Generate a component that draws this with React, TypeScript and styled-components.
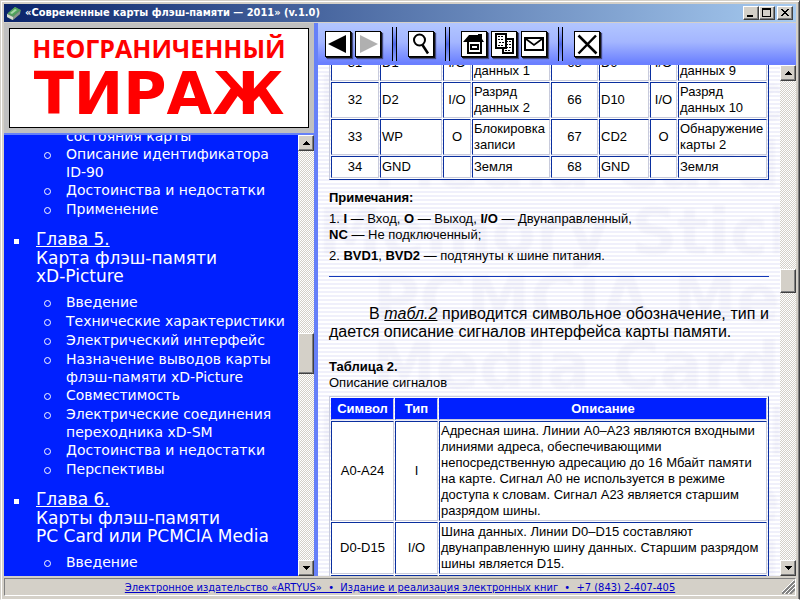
import React, { useLayoutEffect, useRef } from "react";
import styled, { createGlobalStyle, css } from "styled-components";

const face = "#d4d0c8";
const frameBlue = "#6680f8";
const lineBlue = "#0a2f9e";
const lineLight = "#c8cbdc";
const brightBlue = "#0020ff";

const GlobalStyle = createGlobalStyle`
  * { box-sizing: border-box; }
  html, body, #root { height: 100%; margin: 0; }
  body { overflow: hidden; font-family: "Liberation Sans", Arial, sans-serif; font-size: 13px; color: #000; }
`;

const raised = css`
  background: ${face};
  border: 1px solid;
  border-color: #fff #404040 #404040 #fff;
  box-shadow: inset -1px -1px 0 #808080;
`;

const Window = styled.div`
  height: 100vh;
  display: flex;
  flex-direction: column;
  padding: 2px;
  background: ${face};
  border: 1px solid;
  border-color: ${face} #404040 #fff ${face};
  box-shadow: inset 1px 1px 0 #fff, inset -1px 0 0 #808080;
`;

const Frame = styled.div`
  flex: 1;
  min-height: 0;
  display: flex;
  flex-direction: column;
  padding: 1px;
`;

const TitleBar = styled.header`
  flex: none;
  height: 18px;
  display: flex;
  align-items: center;
  gap: 4px;
  padding: 0 3px;
  background: linear-gradient(to right, #0a246a, #a6caf0);
`;

const Title = styled.h1`
  flex: 1;
  margin: 0;
  font: bold 11px/18px "DejaVu Sans Condensed", "DejaVu Sans", sans-serif;
  color: #fff;
  white-space: nowrap;
`;

const WindowButtons = styled.div`
  display: flex;
`;

const WindowButton = styled.button<{ $apart?: boolean }>`
  ${raised}
  width: 16px;
  height: 14px;
  padding: 0;
  margin-left: ${(p) => (p.$apart ? "2px" : "0")};
  display: flex;
  align-items: center;
  justify-content: center;
`;

const Body = styled.div`
  flex: 1;
  min-height: 0;
  display: flex;
  padding-top: 1px;
`;

const Side = styled.aside`
  flex: none;
  width: 314px;
  display: flex;
  flex-direction: column;
  border-right: 4px solid ${frameBlue};
`;

const Banner = styled.div`
  flex: none;
  padding: 5px;
  background: #c0c0c0;
  border-bottom: 2px solid ${frameBlue};
`;

const BannerCard = styled.div`
  height: 100px;
  display: flex;
  flex-direction: column;
  align-items: center;
  justify-content: center;
  border: 1px solid #000;
  background: #fff;
  color: #f00;
  font-family: "Open Sans", "Noto Sans", sans-serif;
  font-weight: 700;
  white-space: nowrap;
`;

const BannerTop = styled.div`
  font-size: 25px;
  line-height: 32px;
`;

const BannerMain = styled.div`
  font-family: "DejaVu Sans", sans-serif;
  font-size: 59px;
  line-height: 60px;
`;

const ScrollArea = styled.div`
  flex: 1;
  min-height: 0;
  display: flex;
`;

const SideScroller = styled.nav`
  flex: 1;
  min-width: 0;
  overflow-y: auto;
  scrollbar-width: none;
  padding-bottom: 16px;
  background: ${brightBlue};
  color: #fff;
  font: 14px/18px "DejaVu Sans", Verdana, sans-serif;
`;

const Chapters = styled.ul`
  margin: 0;
  padding: 0;
  list-style: none;
`;

const Chapter = styled.li`
  display: grid;
  grid-template-columns: 22px 1fr;
  padding-left: 10px;
  margin-top: 11px;

  &:first-child { margin-top: 0; }
`;

const Square = styled.span`
  width: 5px;
  height: 5px;
  margin-top: 9px;
  background: #fff;
`;

const ChapterTitle = styled.div`
  font-size: 17px;
  line-height: 18px;
  white-space: nowrap;
`;

const ChapterLink = styled.a`
  display: table;
  height: 19px;
  color: #fff;
`;

const Topics = styled.ul<{ $first?: boolean }>`
  grid-column: 1 / -1;
  margin: ${(p) => (p.$first ? "0" : "8px 0 0")};
  padding: 0;
  list-style: none;
`;

const Topic = styled.li`
  display: grid;
  grid-template-columns: 22px 1fr;
  min-height: 19px;
  padding-left: 30px;
  white-space: nowrap;
`;

const Ring = styled.span`
  width: 7px;
  height: 7px;
  margin-top: 7px;
  border: 1px solid #fff;
  border-radius: 50%;
`;

const TopicLink = styled.a`
  color: #fff;
  text-decoration: none;
`;

const Bar = styled.div<{ $before: number; $thumb: number; $after: number }>`
  flex: none;
  width: 16px;
  display: grid;
  grid-template-rows: 16px ${(p) => p.$before}fr ${(p) => p.$thumb}px ${(p) => p.$after}fr 16px;
  background: repeating-conic-gradient(#fff 0 25%, ${face} 0 50%) 0 0 / 2px 2px;
`;

const BarButton = styled.button<{ $row: number }>`
  ${raised}
  grid-row: ${(p) => p.$row};
  padding: 0;
  display: flex;
  align-items: center;
  justify-content: center;
`;

const Thumb = styled.div`
  ${raised}
  grid-row: 3;
`;

const Main = styled.main`
  flex: 1;
  min-width: 0;
  display: flex;
  flex-direction: column;
`;

const Toolbar = styled.div`
  flex: none;
  height: 42px;
  display: flex;
  align-items: center;
  padding: 0 7px;
  background: linear-gradient(#b2c6ff 0, #a4b6ff 45%, #6b80ff 95%);
`;

const ToolGroup = styled.div`
  display: flex;
  gap: 4px;
`;

const ToolButton = styled.button`
  width: 26px;
  height: 26px;
  padding: 0;
  display: flex;
  background: #fff;
  border: 1px solid #000;
  box-shadow: 1px 1px 0 #111, 2px 2px 1px #444a80;
`;

const Divider = styled.span`
  width: 5px;
  height: 34px;
  margin: 0 11px;
  border: solid #000;
  border-width: 0 1px;
  background: linear-gradient(#a4b6ff, #5068e8 50%, #8ea4ff);
`;

const Page = styled.div`
  position: relative;
  flex: 1;
  min-width: 0;
  overflow: hidden;
  background: repeating-linear-gradient(#fff 0 2px, #f0f0fb 2px 4px);
`;

const Watermark = styled.div`
  position: absolute;
  inset: 0;
  overflow: hidden;
  color: rgba(70, 70, 150, 0.035);
  font: bold 64px/67px "DejaVu Sans", sans-serif;
  text-align: right;
  white-space: pre;
  filter: blur(1px);
`;

const PageScroller = styled.div`
  position: relative;
  height: 100%;
  overflow-y: auto;
  scrollbar-width: none;
  padding: 0 11px;
  line-height: 16px;
`;

const DataTable = styled.table`
  width: 100%;
  table-layout: fixed;
  border-collapse: separate;
  border-spacing: 1px;
  border: 1px solid;
  border-color: ${lineLight} ${lineBlue} ${lineBlue} ${lineLight};
`;

const Cell = styled.td<{ $center?: boolean }>`
  height: 22px;
  padding: 1px;
  background: #fff;
  border: 1px solid;
  border-color: ${lineBlue} ${lineLight} ${lineLight} ${lineBlue};
  text-align: ${(p) => (p.$center ? "center" : "left")};
  vertical-align: middle;
`;

const HeadCell = styled.th`
  height: 22px;
  padding: 1px;
  background: ${brightBlue};
  border: 1px solid;
  border-color: ${brightBlue} ${lineLight} ${lineLight} ${brightBlue};
  color: #fff;
`;

const NotesTitle = styled.p`
  margin: 10px 0 5px;
  font-weight: bold;
`;

const Note = styled.p`
  margin: 0 0 5px;
`;

const Rule = styled.hr`
  height: 1px;
  margin: 12px 0 28px;
  border: 0;
  background: #1237b8;
`;

const Lead = styled.p`
  margin: 0 0 18px;
  font-size: 16px;
  line-height: 18px;
  text-align: justify;
  text-indent: 40px;
`;

const TableLink = styled.a`
  color: #000;
  font-style: italic;
`;

const TableTitle = styled.p`
  margin: 0 0 5px;
`;

const StatusBar = styled.footer`
  flex: none;
  height: 20px;
  display: flex;
  padding-top: 2px;
`;

const StatusPanel = styled.div`
  flex: 1;
  display: flex;
  align-items: center;
  padding-left: 13px;
  border: 1px solid;
  border-color: #808080 #fff #fff #808080;
`;

const StatusText = styled.div`
  flex: 1;
  text-align: center;
`;

const StatusLink = styled.a`
  color: #0000c8;
  font: 11px/14px "DejaVu Sans Condensed", "DejaVu Sans", sans-serif;
  white-space: nowrap;
`;

type TopicLines = string[];

const chapters: { title?: string; lines?: string[]; topics: TopicLines[] }[] = [
  {
    topics: [
      ["", "состояния карты"],
      ["Описание идентификатора", "ID-90"],
      ["Достоинства и недостатки"],
      ["Применение"],
    ],
  },
  {
    title: "Глава 5.",
    lines: ["Карта флэш-памяти", "xD-Picture"],
    topics: [
      ["Введение"],
      ["Технические характеристики"],
      ["Электрический интерфейс"],
      ["Назначение выводов карты", "флэш-памяти xD-Picture"],
      ["Совместимость"],
      ["Электрические соединения", "переходника xD-SM"],
      ["Достоинства и недостатки"],
      ["Перспективы"],
    ],
  },
  {
    title: "Глава 6.",
    lines: ["Карты флэш-памяти", "PC Card или PCMCIA Media"],
    topics: [["Введение"], ["Технические характеристики"]],
  },
];

const pins = [
  ["31", "D1", "I/O", "Разряд данных 1", "65", "D9", "I/O", "Разряд данных 9"],
  ["32", "D2", "I/O", "Разряд данных 2", "66", "D10", "I/O", "Разряд данных 10"],
  ["33", "WP", "O", "Блокировка записи", "67", "CD2", "O", "Обнаружение карты 2"],
  ["34", "GND", "", "Земля", "68", "GND", "", "Земля"],
];

const signals = [
  [
    "A0-A24",
    "I",
    "Адресная шина. Линии A0–A23 являются входными линиями адреса, обеспечивающими непосредственную адресацию до 16 Мбайт памяти на карте. Сигнал A0 не используется в режиме доступа к словам. Сигнал A23 является старшим разрядом шины.",
  ],
  [
    "D0-D15",
    "I/O",
    "Шина данных. Линии D0–D15 составляют двунаправленную шину данных. Старшим разрядом шины является D15.",
  ],
  ["", "", ""],
];

const watermark = [
  "Memory Card",
  "Media Card",
  "Memory Stick",
  "PCMCIA Me",
  "Media Card",
  "Memory Stick",
  "PCMCIA Me",
  "Media Card",
].join("\n");

function useInitialScroll<T extends HTMLElement>(offset: number) {
  const ref = useRef<T>(null);
  useLayoutEffect(() => {
    if (ref.current) ref.current.scrollTop = offset;
  }, [offset]);
  return ref;
}

function ScrollBar(props: { before: number; thumb: number; after: number }) {
  return (
    <Bar $before={props.before} $thumb={props.thumb} $after={props.after}>
      <BarButton aria-label="Вверх" $row={1}>
        <svg width="7" height="4" shapeRendering="crispEdges">
          <path d="M3 0h1v1h1v1h1v1h1v1H0V3h1V2h1V1h1z" />
        </svg>
      </BarButton>
      <Thumb />
      <BarButton aria-label="Вниз" $row={5}>
        <svg width="7" height="4" shapeRendering="crispEdges">
          <path d="M0 0h7v1H6v1H5v1H4v1H3V3H2V2H1V1H0z" />
        </svg>
      </BarButton>
    </Bar>
  );
}

function Icon({ children }: { children: React.ReactNode }) {
  return (
    <svg width="24" height="24" viewBox="0 0 24 24" fill="none" stroke="#000">
      {children}
    </svg>
  );
}

export default function App() {
  const sideRef = useInitialScroll<HTMLElement>(26);
  const pageRef = useInitialScroll<HTMLDivElement>(22);

  return (
    <Window>
      <GlobalStyle />
      <Frame>
        <TitleBar>
          <svg width="14" height="14" viewBox="0 0 14 14">
            <path d="M0 8 8 1l6 3-1 4-8 6-5-3z" fill="#5f8f68" />
            <path d="M1 7 8 1l5 3-7 6z" fill="#4fa35c" />
            <path d="M3 7 8 3l2 1-5 4z" fill="#a9d8a8" />
            <path d="M0 8l6 3v3l-6-3z" fill="#d8dcd4" />
            <path d="M6 11l7-6v3l-7 6z" fill="#8b968c" />
          </svg>
          <Title>«Современные карты флэш-памяти — 2011» (v.1.0)</Title>
          <WindowButtons>
            <WindowButton aria-label="Свернуть">
              <svg width="12" height="10" shapeRendering="crispEdges">
                <path d="M2 7h6v2H2z" />
              </svg>
            </WindowButton>
            <WindowButton aria-label="Развернуть">
              <svg width="12" height="10" shapeRendering="crispEdges">
                <path d="M1 0h9v9H1zM2 2v6h7V2z" fillRule="evenodd" />
              </svg>
            </WindowButton>
            <WindowButton aria-label="Закрыть" $apart>
              <svg width="12" height="10" shapeRendering="crispEdges">
                <path d="M2 1h2v1h1v1h2V2h1V1h2v1H9v1H8v1H7v1h1v1h1v1h1v1H8V7H7V6H5v1H4v1H2V7h1V6h1V5h1V4H4V3H3V2H2z" />
              </svg>
            </WindowButton>
          </WindowButtons>
        </TitleBar>

        <Body>
          <Side>
            <Banner>
              <BannerCard>
                <BannerTop>НЕОГРАНИЧЕННЫЙ</BannerTop>
                <BannerMain>ТИРАЖ</BannerMain>
              </BannerCard>
            </Banner>
            <ScrollArea>
              <SideScroller ref={sideRef}>
                <Chapters>
                  {chapters.map((chapter, i) => (
                    <Chapter key={i}>
                      {chapter.title && (
                        <>
                          <Square />
                          <ChapterTitle>
                            <ChapterLink href="#chapter">{chapter.title}</ChapterLink>
                            {chapter.lines?.map((line) => (
                              <div key={line}>{line}</div>
                            ))}
                          </ChapterTitle>
                        </>
                      )}
                      <Topics $first={!chapter.title}>
                        {chapter.topics.map((topic) => (
                          <Topic key={topic.join()}>
                            <Ring />
                            <TopicLink href="#topic">
                              {topic.map((line, n) => (
                                <React.Fragment key={n}>
                                  {n > 0 && <br />}
                                  {line}
                                </React.Fragment>
                              ))}
                            </TopicLink>
                          </Topic>
                        ))}
                      </Topics>
                    </Chapter>
                  ))}
                </Chapters>
              </SideScroller>
              <ScrollBar before={182} thumb={41} after={187} />
            </ScrollArea>
          </Side>

          <Main>
            <Toolbar>
              <ToolGroup>
                <ToolButton aria-label="Назад">
                  <Icon>
                    <path d="M2 12 20 3v18z" fill="#000" stroke="none" />
                  </Icon>
                </ToolButton>
                <ToolButton aria-label="Вперёд">
                  <Icon>
                    <path d="M22 12 4 3v18z" fill="#b0b0b0" stroke="none" />
                  </Icon>
                </ToolButton>
              </ToolGroup>
              <Divider />
              <ToolButton aria-label="Поиск">
                <Icon>
                  <ellipse cx="10.500" cy="8" rx="5.500" ry="5.500" strokeWidth="2" />
                  <path d="M13.500 13 19 21.500" strokeWidth="2.500" />
                </Icon>
              </ToolButton>
              <Divider />
              <ToolGroup>
                <ToolButton aria-label="Содержание">
                  <Icon>
                    <path d="M1 10 7 3h9V2h4v5l2 3z" fill="#000" stroke="none" />
                    <path d="M6 9v12h13V9" strokeWidth="2" />
                    <path d="M9 13h7v4H9z" strokeWidth="2" />
                  </Icon>
                </ToolButton>
                <ToolButton aria-label="Страницы">
                  <Icon>
                    <path d="M11 7h10v14H11z" fill="#fff" strokeWidth="2" />
                    <path d="M14 9.500h5M14 12.500h5M14 15.500h5M13 18.500h6" strokeDasharray="2 1" />
                    <path d="M4 2h10v14H4z" fill="#fff" strokeWidth="2" />
                    <path d="M6 4.500h6M6 7.500h5M7 10.500h5M6 13.500h6" strokeDasharray="2 1" />
                  </Icon>
                </ToolButton>
                <ToolButton aria-label="Написать письмо">
                  <Icon>
                    <path d="M3 6h18v12H3z" strokeWidth="2" />
                    <path d="M4 7 12 13l8-6" strokeWidth="1.600" />
                  </Icon>
                </ToolButton>
              </ToolGroup>
              <Divider />
              <ToolButton aria-label="Выход">
                <Icon>
                  <path d="M3.500 3.500l18 18M21 3.500 3.500 21.500" strokeWidth="2.500" />
                </Icon>
              </ToolButton>
            </Toolbar>

            <ScrollArea>
              <Page>
                <Watermark aria-hidden>{watermark}</Watermark>
                <PageScroller ref={pageRef}>
                  <DataTable>
                    <colgroup>
                      <col width="48" />
                      <col width="62" />
                      <col width="28" />
                      <col width="78" />
                      <col width="47" />
                      <col width="50" />
                      <col width="27" />
                      <col />
                    </colgroup>
                    <tbody>
                      {pins.map((row) => (
                        <tr key={row[0]}>
                          {row.map((text, n) => (
                            <Cell key={n} $center={n % 4 === 0 || n % 4 === 2}>
                              {text}
                            </Cell>
                          ))}
                        </tr>
                      ))}
                    </tbody>
                  </DataTable>

                  <NotesTitle>Примечания:</NotesTitle>
                  <Note>
                    1. <b>I</b> — Вход, <b>O</b> — Выход, <b>I/O</b> — Двунаправленный,
                    <br />
                    <b>NC</b> — Не подключенный;
                  </Note>
                  <Note>
                    2. <b>BVD1</b>, <b>BVD2</b> — подтянуты к шине питания.
                  </Note>
                  <Rule />

                  <Lead>
                    В <TableLink href="#table2">табл.2</TableLink> приводится символьное обозначение, тип и
                    дается описание сигналов интерфейса карты памяти.
                  </Lead>

                  <TableTitle id="table2">
                    <b>Таблица 2.</b>
                    <br />
                    Описание сигналов
                  </TableTitle>
                  <DataTable>
                    <colgroup>
                      <col width="63" />
                      <col width="43" />
                      <col />
                    </colgroup>
                    <thead>
                      <tr>
                        <HeadCell>Символ</HeadCell>
                        <HeadCell>Тип</HeadCell>
                        <HeadCell>Описание</HeadCell>
                      </tr>
                    </thead>
                    <tbody>
                      {signals.map((row) => (
                        <tr key={row[0]}>
                          <Cell $center>{row[0]}</Cell>
                          <Cell $center>{row[1]}</Cell>
                          <Cell>{row[2]}</Cell>
                        </tr>
                      ))}
                    </tbody>
                  </DataTable>
                </PageScroller>
              </Page>
              <ScrollBar before={188} thumb={24} after={268} />
            </ScrollArea>
          </Main>
        </Body>

        <StatusBar>
          <StatusPanel>
            <StatusText>
              <StatusLink href="#publisher">
                Электронное издательство «ARTYUS»&nbsp; •&nbsp; Издание и реализация электронных книг&nbsp; •&nbsp; +7 (843) 2-407-405
              </StatusLink>
            </StatusText>
            <svg width="13" height="14">
              <path d="M0 14 13 1M4 14l9-9M8 14l5-5" stroke="#808080" strokeWidth="2" />
              <path d="M-2 14 13 -1M2 14l11-11M6 14l7-7" stroke="#fff" />
            </svg>
          </StatusPanel>
        </StatusBar>
      </Frame>
    </Window>
  );
}
